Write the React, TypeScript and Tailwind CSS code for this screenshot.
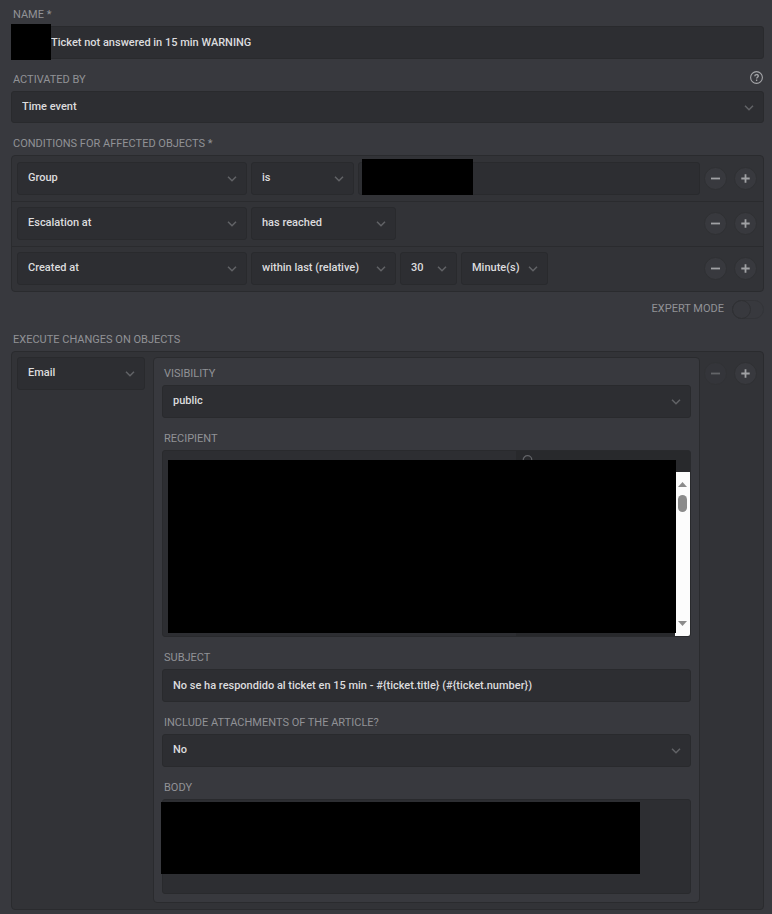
import { clsx } from "clsx";
import { useId, useState, type ReactNode } from "react";

const inputStyle =
  "w-full rounded-[3px] border border-[#292a2d] bg-[#2d2e32] text-[11px] font-medium text-[#dcdcde] outline-none";

const labelStyle = "flex h-6 items-center px-0.5 pt-0.5 text-[11px] text-[#919296] uppercase";

type Condition = {
  attribute: string;
  operator: string;
  operatorWidth: string;
  value?: "objects" | "relative";
};

const conditions: Condition[] = [
  { attribute: "Group", operator: "is", operatorWidth: "w-[103px]", value: "objects" },
  { attribute: "Escalation at", operator: "has reached", operatorWidth: "w-[145px]" },
  {
    attribute: "Created at",
    operator: "within last (relative)",
    operatorWidth: "w-[145px]",
    value: "relative",
  },
];

export default function App() {
  return (
    <main className="min-h-screen bg-[#38393e] pt-0.5 pr-2 pb-1 pl-[11px] font-['Roboto','Noto_Sans',sans-serif] text-[11px] text-[#dcdcde]">
      <form className="flex flex-col" onSubmit={(event) => event.preventDefault()}>
        <NameField />
        <ActivatedBy />
        <Conditions />
        <ExpertMode />
        <Changes />
      </form>
    </main>
  );
}

function Label({ htmlFor, children }: { htmlFor: string; children: ReactNode }) {
  return (
    <label htmlFor={htmlFor} className={labelStyle}>
      {children}
    </label>
  );
}

function Select({
  id,
  label,
  value,
  className,
  height = "h-[33px]",
}: {
  id?: string;
  label?: string;
  value: string;
  className?: string;
  height?: string;
}) {
  return (
    <div className={clsx("relative", className)}>
      <select
        id={id}
        aria-label={label}
        defaultValue={value}
        className={clsx(inputStyle, height, "block appearance-none pr-6 pl-2.5")}
      >
        <option>{value}</option>
      </select>
      <svg
        viewBox="0 0 10 6"
        className="pointer-events-none absolute top-3.5 right-2.5 h-1.5 w-2.5 fill-none stroke-[#626367]"
        strokeWidth="1.5"
      >
        <path d="M1 .8 5 4.8 9 .8" />
      </svg>
    </div>
  );
}

function Redacted({ className }: { className: string }) {
  return <div aria-hidden className={clsx("absolute bg-black", className)} />;
}

function NameField() {
  const id = useId();
  return (
    <div>
      <Label htmlFor={id}>Name *</Label>
      <div className="relative">
        <input
          id={id}
          defaultValue="Ticket not answered in 15 min WARNING"
          className={clsx(inputStyle, "block h-[33px] pr-2.5 pl-[39px]")}
        />
        <Redacted className="-top-0.5 left-0 h-9 w-10" />
      </div>
    </div>
  );
}

function ActivatedBy() {
  const id = useId();
  return (
    <div className="mt-2">
      <div className="flex items-center justify-between">
        <Label htmlFor={id}>Activated by</Label>
        <button type="button" aria-label="Help" className="mr-px mb-1 text-[#a5a6a9]">
          <svg viewBox="0 0 13 13" className="block size-[13px] fill-none stroke-current">
            <circle cx="6.5" cy="6.5" r="5.9" strokeWidth="1.1" />
            <path d="M4.8 5.2c0-2.2 3.5-2.2 3.5-.2 0 1.3-1.7 1.2-1.7 2.6M6.6 8.6v1.3" strokeWidth="1.3" />
          </svg>
        </button>
      </div>
      <Select id={id} value="Time event" height="h-8" />
    </div>
  );
}

function RoundButton({ kind, disabled }: { kind: "remove" | "add"; disabled?: boolean }) {
  return (
    <button
      type="button"
      disabled={disabled}
      aria-label={kind === "add" ? "Add" : "Remove"}
      className="grid size-[23px] shrink-0 place-items-center rounded-full border border-[#2f3033] bg-[#38393e] text-[#a0a1a4] disabled:opacity-45"
    >
      <svg viewBox="0 0 9 9" className="size-[9px] fill-none stroke-current" strokeWidth="1.8">
        <path d={kind === "add" ? "M.3 4.5h8.4M4.5 .3v8.4" : "M0 4.5h9"} />
      </svg>
    </button>
  );
}

function RowControls({ disabled }: { disabled?: boolean }) {
  return (
    <div className="ml-auto flex h-[33px] items-center gap-[7px] pr-px pl-1">
      <RoundButton kind="remove" disabled={disabled} />
      <RoundButton kind="add" />
    </div>
  );
}

function Conditions() {
  return (
    <fieldset className="mt-2">
      <legend className={labelStyle}>Conditions for affected objects *</legend>
      <div className="divide-y divide-[#2a2b2e] rounded border border-[#2a2b2e] bg-[#323337]">
        {conditions.map((condition) => (
          <ConditionRow key={condition.attribute} condition={condition} />
        ))}
      </div>
    </fieldset>
  );
}

function ConditionRow({ condition }: { condition: Condition }) {
  return (
    <div className="flex px-[5px] pt-[5px] pb-1.5 first:pt-1.5">
      <div className="flex min-w-0 flex-1 gap-1">
        <Select label="Attribute" value={condition.attribute} className="w-[230px]" />
        <Select
          label="Operator"
          value={condition.operator}
          className={condition.operatorWidth}
        />
        {condition.value === "objects" && (
          <div className="relative flex-1">
            <input aria-label="Group value" className={clsx(inputStyle, "block h-[33px] px-2.5")} />
            <Redacted className="-top-[3px] left-1 h-9 w-[111px]" />
          </div>
        )}
        {condition.value === "relative" && (
          <>
            <Select label="Amount" value="30" className="w-[57px]" />
            <Select label="Unit" value="Minute(s)" className="w-[87px]" />
          </>
        )}
      </div>
      <RowControls />
    </div>
  );
}

function ExpertMode() {
  const [enabled, setEnabled] = useState(false);
  return (
    <label className="relative mt-2 flex h-[19px] items-center justify-end gap-2 text-[#919296] uppercase">
      Expert mode
      <input
        type="checkbox"
        checked={enabled}
        onChange={(event) => setEnabled(event.target.checked)}
        className="peer sr-only"
      />
      <span className="flex h-[19px] w-8 rounded-full border border-[#333438] peer-checked:justify-end">
        <span className="-m-px size-[19px] rounded-full border border-[#2f3033]" />
      </span>
    </label>
  );
}

function Changes() {
  return (
    <fieldset className="mt-2">
      <legend className={labelStyle}>Execute changes on objects</legend>
      <div className="flex rounded border border-[#2a2b2e] bg-[#323337] px-[5px] pt-[5px] pb-1.5">
        <Select label="Action" value="Email" className="w-32" />
        <EmailAction />
        <RowControls disabled />
      </div>
    </fieldset>
  );
}

function EmailAction() {
  const id = useId();
  return (
    <div className="ml-2 min-w-0 flex-1 space-y-2 rounded border border-[#2a2b2e] bg-[#38393e] px-2 pt-[3px] pb-2">
      <div>
        <Label htmlFor={`${id}-visibility`}>Visibility</Label>
        <Select id={`${id}-visibility`} value="public" />
      </div>
      <div>
        <Label htmlFor={`${id}-recipient`}>Recipient</Label>
        <RecipientPicker id={`${id}-recipient`} />
      </div>
      <div>
        <Label htmlFor={`${id}-subject`}>Subject</Label>
        <input
          id={`${id}-subject`}
          defaultValue="No se ha respondido al ticket en 15 min - #{ticket.title} (#{ticket.number})"
          className={clsx(inputStyle, "block h-[33px] px-2.5")}
        />
      </div>
      <div>
        <Label htmlFor={`${id}-attachments`}>Include attachments of the article?</Label>
        <Select id={`${id}-attachments`} value="No" />
      </div>
      <div>
        <Label htmlFor={`${id}-body`}>Body</Label>
        <div className="relative">
          <textarea id={`${id}-body`} className={clsx(inputStyle, "block h-[95px] resize-none p-2.5")} />
          <Redacted className="top-[3px] right-[51px] -left-px h-[72px]" />
        </div>
      </div>
    </div>
  );
}

function RecipientPicker({ id }: { id: string }) {
  return (
    <div className="relative flex h-[187px] overflow-hidden rounded-[3px] border border-[#292a2d] bg-[#2d2e32]">
      <div className="flex-[353]" />
      <div className="flex flex-[174] flex-col bg-[#28292c]">
        <div className="relative h-[21px] shrink-0">
          <svg
            viewBox="0 0 12 12"
            className="absolute top-1 left-1.5 size-3 fill-none stroke-[#626367]"
            strokeWidth="1.2"
          >
            <circle cx="5.5" cy="5" r="4.3" />
            <path d="m8.6 8 3 3" />
          </svg>
          <input id={id} className="h-full w-full bg-transparent pl-6 outline-none" />
        </div>
        <div className="flex min-h-0 flex-1 justify-end">
          <ScrollBar />
        </div>
      </div>
      <Redacted className="top-[9px] right-3.5 left-[5px] h-[173px]" />
    </div>
  );
}

function ScrollBar() {
  return (
    <div aria-hidden className="flex w-[15px] flex-col items-center bg-[#fcfcfc] py-2.5">
      <svg viewBox="0 0 9 5" className="h-[5px] w-[9px] fill-[#8b8b8b]">
        <path d="M0 5 4.5 0 9 5z" />
      </svg>
      <div className="mt-2 h-[17px] w-[9px] rounded-full bg-[#8b8b8b]" />
      <svg viewBox="0 0 9 5" className="mt-auto h-[5px] w-[9px] fill-[#8b8b8b]">
        <path d="M0 0h9L4.5 5z" />
      </svg>
    </div>
  );
}
